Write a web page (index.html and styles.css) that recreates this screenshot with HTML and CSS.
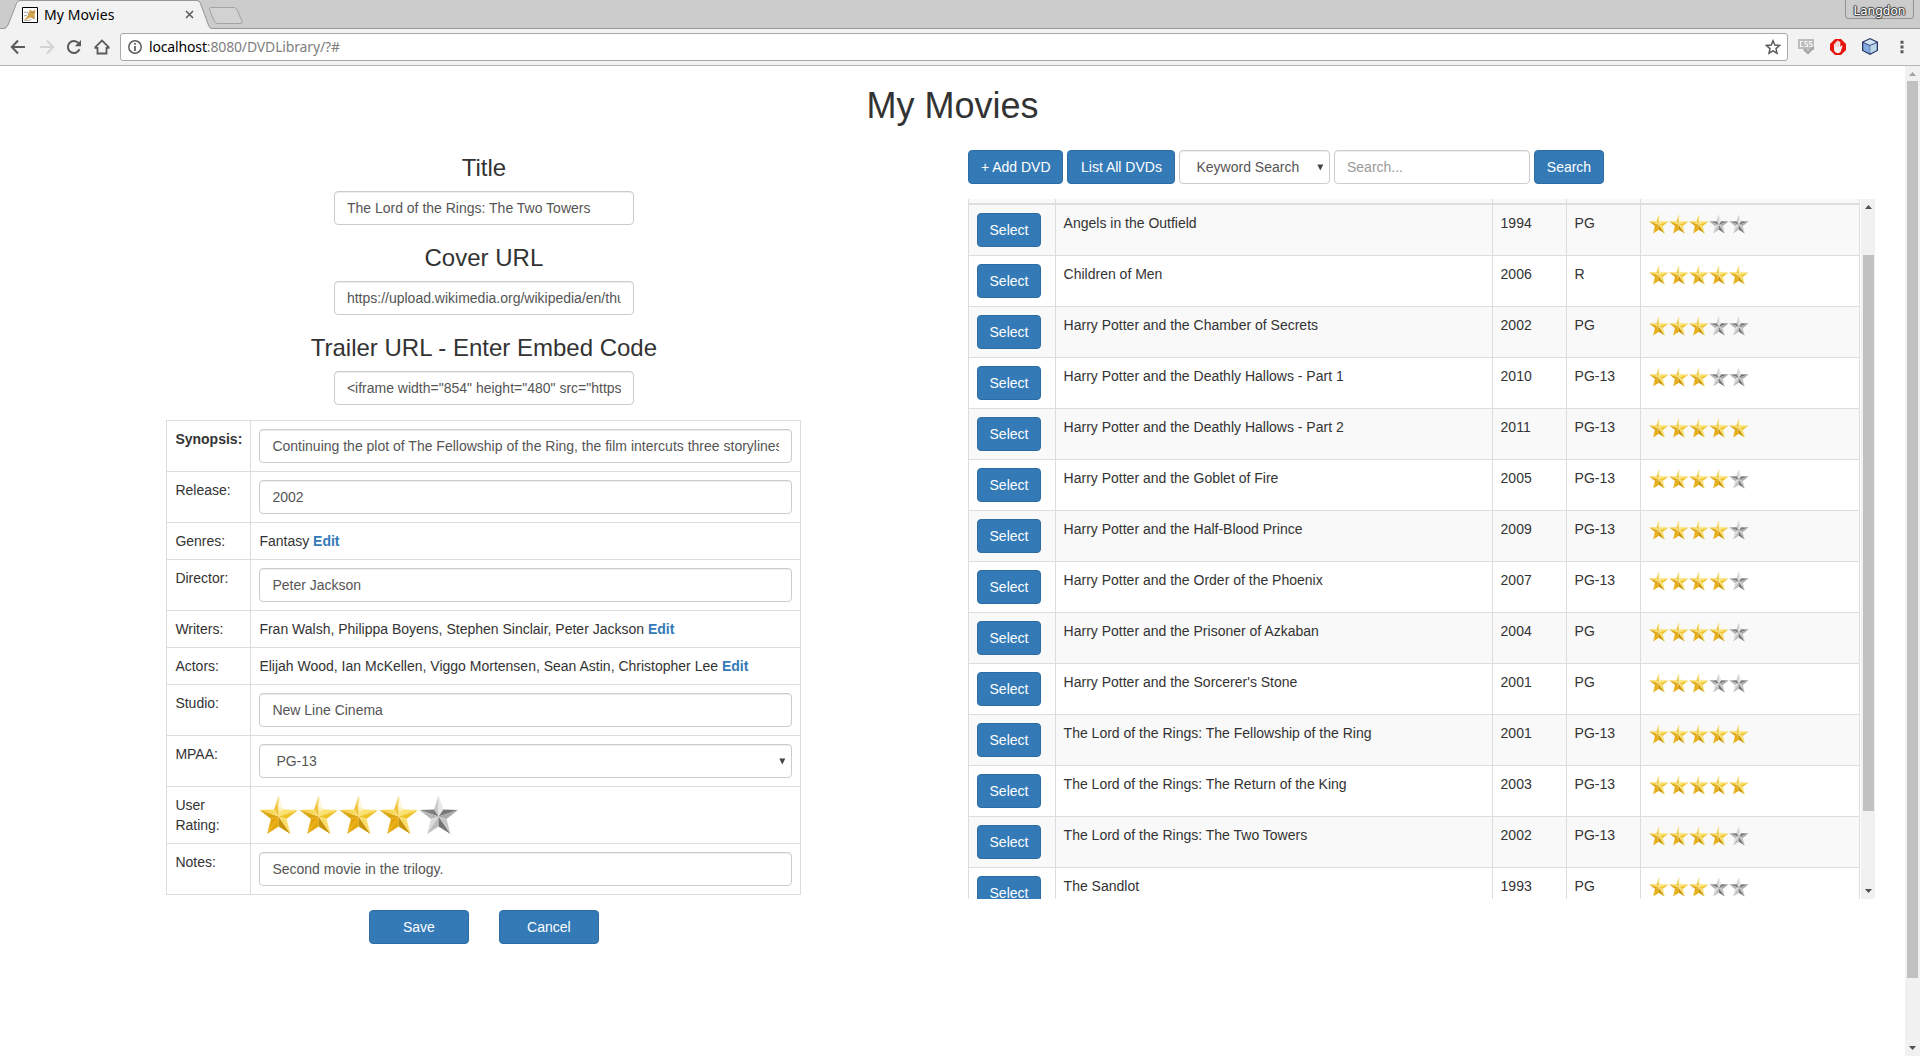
FILE: index.html
```html
<!DOCTYPE html>
<html lang="en">
<head>
<meta charset="utf-8">
<title>My Movies</title>
<link rel="stylesheet" href="styles.css">
</head>
<body>
<svg class="defs" aria-hidden="true">
  <defs>
    <linearGradient id="g-pale" x1="0" y1="0" x2="0" y2="1"><stop offset="0" stop-color="#f6de86"/><stop offset=".45" stop-color="#fffdf0"/><stop offset="1" stop-color="#fbd94c"/></linearGradient>
    <linearGradient id="g-top" x1="0" y1="0" x2="0" y2="1"><stop offset="0" stop-color="#f7dc6a"/><stop offset="1" stop-color="#e9b82a"/></linearGradient>
    <linearGradient id="g-arm" x1="0" y1="0" x2="1" y2="0"><stop offset="0" stop-color="#f3c526"/><stop offset="1" stop-color="#fbe47c"/></linearGradient>
    <linearGradient id="g-leg" x1="0" y1="0" x2="0" y2="1"><stop offset="0" stop-color="#e09c00"/><stop offset="1" stop-color="#f0bd22"/></linearGradient>
    <linearGradient id="s-dark" x1="0" y1="0" x2="1" y2="0"><stop offset="0" stop-color="#8a8a8a"/><stop offset="1" stop-color="#757575"/></linearGradient>
  </defs>
  <symbol id="gold" viewBox="0 0 40 40">
    <path fill="url(#g-top)" d="M19.6 .5 15 14.5 19.6 21.5z"/>
    <path fill="url(#g-pale)" d="M19.6 .5 24.5 14.5 19.6 21.5z"/>
    <path fill="url(#g-arm)" d="M.5 15 15 14.5 19.6 21.5z"/>
    <path fill="#dca510" d="M.5 15 12 24 19.6 21.5z"/>
    <path fill="#fbe06a" d="M39 15 24.5 14.5 19.6 21.5z"/>
    <path fill="#f1c32a" d="M39 15 27.5 24 19.6 21.5z"/>
    <path fill="url(#g-leg)" d="M8 39 12 24 19.6 21.5z"/>
    <path fill="#e6a90a" d="M8 39 19.6 31.500V21.5z"/>
    <path fill="#c6930a" d="M31.5 39 19.6 31.500V21.5z"/>
    <path fill="#f8de68" d="M31.5 39 27.5 24 19.6 21.5z"/>
  </symbol>
  <symbol id="silver" viewBox="0 0 40 40">
    <path fill="#c9c9c9" d="M19.6 .5 15 14.5 19.6 21.5z"/>
    <path fill="#e8e8e8" d="M19.6 .5 24.5 14.5 19.6 21.5z"/>
    <path fill="url(#s-dark)" d="M.5 15 15 14.5 19.6 21.5z"/>
    <path fill="#b4b4b4" d="M.5 15 12 24 19.6 21.5z"/>
    <path fill="#777" d="M39 15 24.5 14.5 19.6 21.5z"/>
    <path fill="#a9a9a9" d="M39 15 27.5 24 19.6 21.5z"/>
    <path fill="#dcdcdc" d="M8 39 12 24 19.6 21.5z"/>
    <path fill="#bdbdbd" d="M8 39 19.6 31.500V21.5z"/>
    <path fill="#747474" d="M31.5 39 19.6 31.500V21.5z"/>
    <path fill="#c6c6c6" d="M31.5 39 27.5 24 19.6 21.5z"/>
  </symbol>
  <symbol id="r3" viewBox="0 0 200 40"><use href="#gold" width="40" height="40"/><use href="#gold" x="40" width="40" height="40"/><use href="#gold" x="80" width="40" height="40"/><use href="#silver" x="120" width="40" height="40"/><use href="#silver" x="160" width="40" height="40"/></symbol>
  <symbol id="r4" viewBox="0 0 200 40"><use href="#gold" width="40" height="40"/><use href="#gold" x="40" width="40" height="40"/><use href="#gold" x="80" width="40" height="40"/><use href="#gold" x="120" width="40" height="40"/><use href="#silver" x="160" width="40" height="40"/></symbol>
  <symbol id="r5" viewBox="0 0 200 40"><use href="#gold" width="40" height="40"/><use href="#gold" x="40" width="40" height="40"/><use href="#gold" x="80" width="40" height="40"/><use href="#gold" x="120" width="40" height="40"/><use href="#gold" x="160" width="40" height="40"/></symbol>
</svg>

<header class="tabstrip">
  <div class="tab">
    <svg class="tab-shape" width="212" height="29" viewBox="0 0 212 29"><path d="M0 29V28.500H5C7 28 7 27 8 25L16.500 3.500Q17.500 1 20 .5H197Q199 1 200 3.500L208 25Q209 28.500 212 28.500V29z" fill="#f2f2f2"/><path d="M0 28.500H4Q6.500 28 8 25L16.500 3.500Q17.500 .5 20 .5H197Q199.500 .5 200.500 3.500L208.500 25Q209.500 28.500 212 28.500" fill="none" stroke="#979797"/></svg>
    <svg class="favicon" width="16" height="16" viewBox="0 0 16 16"><path fill="#fff" stroke="#000" d="M.5.5h15v15H.5z"/><path fill="#d9a650" d="M7 4.500l1-2 1.500 1.200h2L13 2.500l.5 3-1 2 .5 3-1.500 1.500-3-1.500L5 12l-2.500 1.500L3 12l2-2.500 1.500-2z"/><path fill="none" stroke="#8a8577" stroke-width=".8" d="M2 5.500q2-1 3.500 0T6.500 8M2 9l3-1M2.500 13.300h5l2-1M9 5.500h3M10 9.500l3 3"/></svg>
    <span class="tab-title">My Movies</span>
    <svg class="tab-close" width="9" height="9" viewBox="0 0 9 9"><path d="M1 1l7 7M8 1L1 8" stroke="#5a5a5a" stroke-width="1.500"/></svg>
  </div>
  <svg class="newtab" width="36" height="19" viewBox="0 0 36 19"><path d="M3 1.500H26Q28 1.500 29 3.500L34 15.500Q34.500 17.500 33 17.500H9.500Q7.500 17.500 6.500 15.500L1.500 4Q.8 1.500 3 1.500z" fill="#d2d2d2" stroke="#a3a3a3"/></svg>
  <span class="profile">Langdon</span>
</header>

<nav class="toolbar">
  <svg width="16" height="16" viewBox="0 0 16 16"><path d="M15 8H2M8 1.500L1.800 8 8 14.500" fill="none" stroke="#5a5a5a" stroke-width="2"/></svg>
  <svg class="forward" width="16" height="16" viewBox="0 0 16 16"><path d="M1 8h13M8 1.500L14.200 8 8 14.500" fill="none" stroke="#d3d3d3" stroke-width="2"/></svg>
  <svg class="reload" width="16" height="16" viewBox="0 0 16 16"><path d="M13.500 10.200A6 6 0 1 1 12.500 4.200" fill="none" stroke="#5a5a5a" stroke-width="2"/><path d="M15 1v6.200H8.800z" fill="#5a5a5a"/></svg>
  <svg class="home" width="18" height="16" viewBox="0 0 18 16"><path d="M4.500 8V14.500H13.500V8M1.500 8.800H4M16.500 8.800H14M1.800 8.700L9 1.500l7.200 7.200" fill="none" stroke="#5a5a5a" stroke-width="1.800"/></svg>
  <div class="address">
    <svg width="14" height="14" viewBox="0 0 14 14"><circle cx="7" cy="7" r="6.200" fill="none" stroke="#5a5a5a" stroke-width="1.500"/><path d="M7 6v5M7 3v1.700" stroke="#5a5a5a" stroke-width="1.700"/></svg>
    <span class="url"><b>localhost</b>:8080/DVDLibrary/?#</span>
    <svg class="bookmark" width="16" height="16" viewBox="0 0 16 16"><path d="M8 1.800l1.800 4.300 4.700.4-3.500 3.100 1 4.600L8 11.800l-4 2.400 1-4.600L1.500 6.500l4.700-.4z" fill="none" stroke="#5a5a5a" stroke-width="1.500"/></svg>
  </div>
  <svg class="ext" width="16" height="17" viewBox="0 0 16 17"><path fill="#bcbcbc" d="M0 1h16v11H7l-1-1H0z"/><path fill="#a6a6a6" d="M5 12l2-2 3 3 5-5 1.500 2L10 16.500z"/><path d="M5 3.500H2.500v5H5M9.500 3.500H7V6h2.500v2.500H6.500M14 3.500h-2.500V6H14v2.500h-3" fill="none" stroke="#f5f5f5" stroke-width="1.200"/></svg>
  <svg class="ext" width="16" height="16" viewBox="0 0 16 16"><path fill="#e8140c" d="M5 0h6l5 5v6l-5 5H5l-5-5V5z"/><path fill="#f4f4f4" d="M4 8V5q.8-1 1.500 0V3q.8-1 1.600 0V2q.8-.8 1.600 0v1q.8-1 1.600 0v5l1.300-1.500q1.200-.2.900.8L10.500 13Q9 14.500 7 14 4 13.500 4 10z"/><path stroke="#e5a5a2" stroke-width=".5" d="M5.500 4v4M7.100 3v5M8.700 3v5"/></svg>
  <svg class="ext" width="16" height="17" viewBox="0 0 16 17"><path fill="#2b3566" d="M8 0l8 3.800v9L8 17 0 12.800v-9z"/><path fill="#cfe4f3" d="M8 1.300l6.300 2.900L8 7 1.700 4.200z"/><path fill="#84abdf" d="M1.300 5L7.800 7.800v7.800L1.300 12.200z"/><path fill="#b8d8ea" d="M14.700 5L8.200 7.800v7.800l6.500-3.400z"/></svg>
  <svg class="dots" width="4" height="14" viewBox="0 0 4 14"><path d="M.5.800h3v3h-3zM.5 5.500h3v3h-3zM.5 10.200h3v3h-3z" fill="#5a5a5a"/></svg>
</nav>

<div class="viewport">
<main class="page">
  <h1>My Movies</h1>
  <div class="columns">
    <form class="editor">
      <h3>Title</h3>
      <input class="control" value="The Lord of the Rings: The Two Towers">
      <h3>Cover URL</h3>
      <input class="control" value="https://upload.wikimedia.org/wikipedia/en/thumb/a/ad/Lord_of_the_Rings.jpg">
      <h3>Trailer URL - Enter Embed Code</h3>
      <input class="control" value="&lt;iframe width=&quot;854&quot; height=&quot;480&quot; src=&quot;https://www.youtube.com&quot;&gt;&lt;/iframe&gt;">
      <table class="details">
        <tr><th class="strong">Synopsis:</th><td><input class="control" value="Continuing the plot of The Fellowship of the Ring, the film intercuts three storylines. Frodo and Sam continue their journey."></td></tr>
        <tr><th>Release:</th><td><input class="control" value="2002"></td></tr>
        <tr><th>Genres:</th><td>Fantasy <a>Edit</a></td></tr>
        <tr><th>Director:</th><td><input class="control" value="Peter Jackson"></td></tr>
        <tr><th>Writers:</th><td>Fran Walsh, Philippa Boyens, Stephen Sinclair, Peter Jackson <a>Edit</a></td></tr>
        <tr><th>Actors:</th><td>Elijah Wood, Ian McKellen, Viggo Mortensen, Sean Astin, Christopher Lee <a>Edit</a></td></tr>
        <tr><th>Studio:</th><td><input class="control" value="New Line Cinema"></td></tr>
        <tr><th>MPAA:</th><td><div class="control select"><span>PG-13</span><svg width="7" height="7"><path d="M.3.500h6L3.300 6.500z" fill="#444"/></svg></div></td></tr>
        <tr><th>User Rating:</th><td><svg class="rating-lg" width="200" height="40"><use href="#r4"/></svg></td></tr>
        <tr><th>Notes:</th><td><input class="control" value="Second movie in the trilogy."></td></tr>
      </table>
      <div class="actions"><button type="button" class="btn wide">Save</button><button type="button" class="btn wide">Cancel</button></div>
    </form>

    <section class="library">
      <div class="search">
        <button class="btn add">+ Add DVD</button>
        <button class="btn list-all">List All DVDs</button>
        <div class="control select kind"><span>Keyword Search</span><svg width="7" height="7"><path d="M.3.500h6L3.300 6.500z" fill="#444"/></svg></div>
        <input class="control query" placeholder="Search...">
        <button class="btn go">Search</button>
      </div>
      <div class="scroller">
        <table class="movies">
          <colgroup><col class="c-select"><col class="c-title"><col class="c-year"><col class="c-mpaa"><col class="c-rating"></colgroup>
          <thead><tr><th></th><th></th><th></th><th></th><th></th></tr></thead>
          <tbody>
          <tr><td><button class="btn">Select</button></td><td>Angels in the Outfield</td><td>1994</td><td>PG</td><td><svg class="rating" width="100" height="20"><use href="#r3"/></svg></td></tr>
          <tr><td><button class="btn">Select</button></td><td>Children of Men</td><td>2006</td><td>R</td><td><svg class="rating" width="100" height="20"><use href="#r5"/></svg></td></tr>
          <tr><td><button class="btn">Select</button></td><td>Harry Potter and the Chamber of Secrets</td><td>2002</td><td>PG</td><td><svg class="rating" width="100" height="20"><use href="#r3"/></svg></td></tr>
          <tr><td><button class="btn">Select</button></td><td>Harry Potter and the Deathly Hallows - Part 1</td><td>2010</td><td>PG-13</td><td><svg class="rating" width="100" height="20"><use href="#r3"/></svg></td></tr>
          <tr><td><button class="btn">Select</button></td><td>Harry Potter and the Deathly Hallows - Part 2</td><td>2011</td><td>PG-13</td><td><svg class="rating" width="100" height="20"><use href="#r5"/></svg></td></tr>
          <tr><td><button class="btn">Select</button></td><td>Harry Potter and the Goblet of Fire</td><td>2005</td><td>PG-13</td><td><svg class="rating" width="100" height="20"><use href="#r4"/></svg></td></tr>
          <tr><td><button class="btn">Select</button></td><td>Harry Potter and the Half-Blood Prince</td><td>2009</td><td>PG-13</td><td><svg class="rating" width="100" height="20"><use href="#r4"/></svg></td></tr>
          <tr><td><button class="btn">Select</button></td><td>Harry Potter and the Order of the Phoenix</td><td>2007</td><td>PG-13</td><td><svg class="rating" width="100" height="20"><use href="#r4"/></svg></td></tr>
          <tr><td><button class="btn">Select</button></td><td>Harry Potter and the Prisoner of Azkaban</td><td>2004</td><td>PG</td><td><svg class="rating" width="100" height="20"><use href="#r4"/></svg></td></tr>
          <tr><td><button class="btn">Select</button></td><td>Harry Potter and the Sorcerer's Stone</td><td>2001</td><td>PG</td><td><svg class="rating" width="100" height="20"><use href="#r3"/></svg></td></tr>
          <tr><td><button class="btn">Select</button></td><td>The Lord of the Rings: The Fellowship of the Ring</td><td>2001</td><td>PG-13</td><td><svg class="rating" width="100" height="20"><use href="#r5"/></svg></td></tr>
          <tr><td><button class="btn">Select</button></td><td>The Lord of the Rings: The Return of the King</td><td>2003</td><td>PG-13</td><td><svg class="rating" width="100" height="20"><use href="#r5"/></svg></td></tr>
          <tr><td><button class="btn">Select</button></td><td>The Lord of the Rings: The Two Towers</td><td>2002</td><td>PG-13</td><td><svg class="rating" width="100" height="20"><use href="#r4"/></svg></td></tr>
          <tr><td><button class="btn">Select</button></td><td>The Sandlot</td><td>1993</td><td>PG</td><td><svg class="rating" width="100" height="20"><use href="#r3"/></svg></td></tr>
          </tbody>
        </table>
        <div class="scrollbar inner">
          <svg class="up" width="7" height="4"><path d="M0 4L3.500 0 7 4z"/></svg>
          <i class="thumb"></i>
          <svg class="down" width="7" height="4"><path d="M0 0L3.500 4 7 0z"/></svg>
        </div>
      </div>
    </section>
  </div>
</main>
<div class="scrollbar outer">
  <svg class="up" width="7" height="4"><path d="M0 4L3.500 0 7 4z"/></svg>
  <i class="thumb"></i>
  <svg class="down" width="7" height="4"><path d="M0 0L3.500 4 7 0z"/></svg>
</div>
</div>
</body>
</html>
```
FILE: styles.css
```css
* { box-sizing: border-box; }

html, body { height: 1056px; overflow: hidden; }

body {
  margin: 0;
  display: flex;
  flex-direction: column;
  font: 14px/20px "Liberation Sans", Arial, sans-serif;
  color: #333;
  background: #fff;
}

svg { display: block; flex: none; }
.defs { position: absolute; width: 0; height: 0; }

/* Browser chrome */
.tabstrip {
  height: 29px;
  flex: none;
  display: flex;
  background: linear-gradient(#ccc, #ccc 28px, #979797 28px);
}
.tab {
  position: relative;
  width: 212px;
  height: 29px;
  padding: 0 18px 0 22px;
  display: flex;
  align-items: center;
}
.tab-shape { position: absolute; left: 0; top: 0; }
.favicon, .tab-title, .tab-close { position: relative; }
.tab-title {
  margin: 0 auto 0 6px;
  font: 14px/28px "Noto Sans", sans-serif;
  color: #000;
  letter-spacing: 0.1px;
}
.newtab { margin: 6px auto 0 -4px; }
.profile {
  width: 69px;
  height: 19px;
  margin-right: 6px;
  border: 1px solid #929292;
  border-top: 0;
  border-radius: 0 0 4px 4px;
  font: 12px/22px "DejaVu Sans", sans-serif;
  text-align: center;
  color: #fff;
  text-shadow: 1px 0 1px #333, -1px 0 1px #333, 0 1px 1px #333, 0 -1px 1px #333;
}

.toolbar {
  height: 37px;
  flex: none;
  display: flex;
  align-items: center;
  padding: 0 16px 1px 10px;
  background: #f2f2f2;
  border-bottom: 1px solid #b6b6b6;
}
.forward { margin-left: 13px; }
.reload { margin-left: 11px; }
.home { margin-left: 11px; }
.address {
  flex: 1;
  height: 28px;
  margin: 0 10px 0 9px;
  padding: 0 6px 0 7px;
  display: flex;
  align-items: center;
  background: #fff;
  border: 1px solid #a9a9a9;
  border-radius: 3px;
}
.url {
  margin: 0 auto 0 7px;
  font: 14px/26px "Noto Sans", sans-serif;
  letter-spacing: -0.15px;
  color: #808080;
}
.url b { font-weight: 400; color: #000; }
.ext { margin-right: 16px; }
.dots { margin-left: 6px; }

/* Page */
.viewport { flex: 1; display: flex; min-height: 0; }
.page { flex: 1; }
h1, h3 { margin: 0 0 10px; font-weight: 400; text-align: center; }
h1 { padding-top: 20px; font-size: 36px; line-height: 39px; }
h3 { font-size: 24px; line-height: 26px; }
.columns { display: flex; }

.control {
  display: block;
  width: 100%;
  height: 34px;
  padding: 6px 12px;
  font: 14px/20px "Liberation Sans", Arial, sans-serif;
  color: #555;
  background: #fff;
  border: 1px solid #ccc;
  border-radius: 4px;
  box-shadow: inset 0 1px 1px rgba(0, 0, 0, .075);
}
.control::placeholder { color: #999; opacity: 1; }
.select {
  display: flex;
  justify-content: space-between;
  align-items: center;
  padding: 6px 5px 6px 16px;
}
.btn {
  height: 34px;
  padding: 6px 12px;
  font: 14px/20px "Liberation Sans", Arial, sans-serif;
  color: #fff;
  background: #337ab7;
  border: 1px solid #2e6da4;
  border-radius: 4px;
}

.editor {
  width: 635px;
  margin-left: 166.4px;
  display: flex;
  flex-direction: column;
  align-items: center;
}
.editor h3 { margin-top: 20px; }
.editor > .control { width: 300px; }

table { border-collapse: separate; border-spacing: 0; table-layout: fixed; }
th, td { vertical-align: top; text-align: left; font-weight: 400; padding: 8px; }
.details {
  width: 635px;
  margin-top: 15px;
  border-left: 1px solid #ddd;
  border-top: 1px solid #ddd;
}
.details th, .details td { border-right: 1px solid #ddd; border-bottom: 1px solid #ddd; }
.details th { width: 84px; }
.details .strong { font-weight: 700; white-space: nowrap; }
.details a { color: #337ab7; font-weight: 700; }
.actions { display: flex; gap: 30px; margin-top: 15px; }
.wide { width: 100px; }

.library { width: 907px; margin: 15px 0 0 166.6px; }
.search { display: flex; margin-bottom: 15px; }
.search .btn { padding: 6px 0; }
.search .add { width: 95.500px; margin-right: 4px; }
.search .list-all { width: 108px; margin-right: 4px; }
.search .kind { width: 150.500px; margin-right: 4px; }
.search .query { width: 196px; margin-right: 4px; }
.search .go { width: 70px; }

.scroller { height: 700px; overflow: hidden; display: flex; }
.movies { width: 892px; border-left: 1px solid #ddd; }
.movies th { height: 6px; padding: 0; background: #f9f9f9; border-right: 1px solid #ddd; border-bottom: 2px solid #ddd; }
.movies td { height: 51px; border-right: 1px solid #ddd; border-bottom: 1px solid #ddd; }
.movies td + td { padding-left: 7.6px; }
.movies tbody tr:nth-child(odd) { background: #f9f9f9; }
.movies .btn { width: 64px; display: block; padding: 6px 0; }
.c-select { width: 87px; }
.c-title { width: 437px; }
.c-year, .c-mpaa { width: 74px; }
.c-rating { width: 219px; }
.rating { margin-top: 1px; }

.scrollbar { display: flex; flex-direction: column; background: #f1f1f1; fill: #505050; }
.scrollbar .thumb { display: block; width: 11px; margin-left: 2px; background: #c1c1c1; }
.scrollbar svg { margin-left: 4px; }
.inner { width: 14px; height: 700px; margin-left: 1px; padding: 6px 0; }
.inner .thumb { height: 556px; margin-top: 46px; }
.inner .down { margin-top: auto; }
.outer { width: 15px; padding: 6px 0; }
.outer .up { fill: #a3a3a3; }
.outer .thumb { height: 897px; margin-top: 5px; }
.outer .down { margin-top: auto; }
```
